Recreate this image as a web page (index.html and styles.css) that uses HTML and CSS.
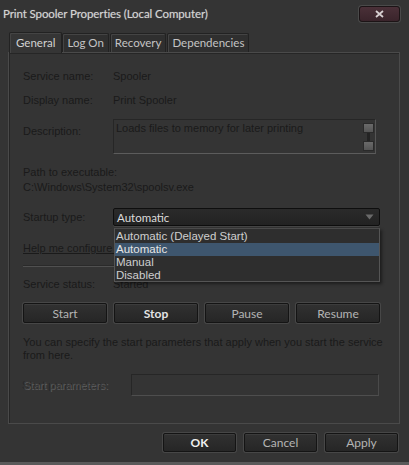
FILE: index.html
```html
<!DOCTYPE html>
<html>
<head>
<meta charset="utf-8">
<link rel="stylesheet" href="styles.css">
</head>
<body>
<div class="window">
  <div class="titlebar">
    <span class="title">Print Spooler Properties (Local Computer)</span>
    <span class="close">
      <svg width="9" height="8" viewBox="0 0 9 8"><path d="M1 1 L8 7 M8 1 L1 7" stroke="#d8d0d2" stroke-width="1.8"/></svg>
    </span>
  </div>
  <div class="tabs">
    <div class="tab active">General</div>
    <div class="tab">Log On</div>
    <div class="tab">Recovery</div>
    <div class="tab">Dependencies</div>
  </div>
  <div class="panel">
    <div class="row r1"><span class="lbl">Service name:</span><span class="val">Spooler</span></div>
    <div class="row r2"><span class="lbl">Display name:</span><span class="val">Print Spooler</span></div>
    <div class="row desc"><span class="lbl desc-lbl">Description:</span>
      <div class="descbox">
        <span class="desc-text">Loads files to memory for later printing</span>
        <div class="scroll"><span class="sb"></span><span class="sb"></span></div>
      </div>
    </div>
    <div class="path-lbl">Path to executable:</div>
    <div class="path">C:\Windows\System32\spoolsv.exe</div>
    <div class="row startup"><span class="lbl">Startup type:</span>
      <div class="combo"><span>Automatic</span>
        <svg class="arrow" width="9" height="6" viewBox="0 0 9 6"><path d="M0.5 0.5 L8.5 0.5 L4.5 5.5 Z" fill="#6a6a6a"/></svg>
      </div>
    </div>
    <div class="help"><span class="link">Help me configure service startup options.</span></div>
    <div class="sep"></div>
    <div class="row status"><span class="lbl">Service status:</span><span class="val">Started</span></div>
    <div class="btnrow">
      <div class="btn">Start</div>
      <div class="btn bright">Stop</div>
      <div class="btn">Pause</div>
      <div class="btn">Resume</div>
    </div>
    <div class="info">You can specify the start parameters that apply when you start the service from here.</div>
    <div class="row params"><span class="lbl disabled">Start parameters:</span><div class="pbox"></div></div>

    <div class="dropdown">
      <div class="opt">Automatic (Delayed Start)</div>
      <div class="opt sel">Automatic</div>
      <div class="opt">Manual</div>
      <div class="opt">Disabled</div>
    </div>
  </div>
  <div class="footer">
    <div class="fbtn ok">OK</div>
    <div class="fbtn">Cancel</div>
    <div class="fbtn">Apply</div>
  </div>
</div>
</body>
</html>
```
FILE: styles.css
```css
html, body { margin: 0; padding: 0; background: #343434; }
.window {
  width: 409px; height: 465px; box-sizing: border-box;
  background: #343434; position: relative; overflow: hidden;
  font-family: "Liberation Sans", Arial, sans-serif; font-size: 11px;
  border-bottom: 3px solid #5a5a5a;
}
.titlebar {
  height: 28px; display: flex; align-items: center; justify-content: space-between;
  padding: 0 9px 0 3px;
}
.title {
  font-family: Lato, "Open Sans", sans-serif; font-size: 11.5px; color: #d4d4d4;
  margin-top: -1px; letter-spacing: -0.1px; text-shadow: 0 0 1px rgba(210,210,210,0.5);
}
.close {
  width: 39px; height: 14px; margin-top: -1px;
  border: 1px solid #1c1416; border-radius: 3px;
  background: linear-gradient(#4a3038, #3a242b);
  box-shadow: 0 0 0 1px #4a4a4a;
  display: flex; align-items: center; justify-content: center;
}
.tabs { display: flex; align-items: flex-end; margin: 4px 0 0 9px; height: 20px; }
.tab {
  font-family: Lato, "Open Sans", sans-serif; font-size: 11.5px; color: #c4c4c4;
  height: 18px; line-height: 18px; padding: 0 4px;
  background: #2f2f2f; border: 1px solid #222; border-bottom: none;
  box-shadow: inset 1px 1px 0 #444;
  margin-right: 1px; border-radius: 2px 2px 0 0;
}
.tab.active {
  height: 20px; line-height: 19px; padding: 0 6px; background: #353535; color: #d2d2d2;
  position: relative; z-index: 2; margin-bottom: -1px; margin-right: 0;
}
.panel {
  margin-left: 8px; width: 392px; height: 372px; box-sizing: border-box;
  border: 1px solid #4a4a4a; box-shadow: inset 1px 1px 0 #262626;
  padding: 0 0 0 14px; position: relative;
  color: #1a1a1a; line-height: 13px;
}
.row { display: flex; align-items: center; }
.lbl { width: 90px; flex: none; }
.r1 { margin-top: 17px; }
.r2 { margin-top: 11px; }
.desc { margin-top: 12px; align-items: flex-start; }
.desc-lbl { margin-top: 6px; }
.descbox {
  width: 263px; height: 35px; box-sizing: border-box; position: relative;
  border: 1px solid #262626; border-bottom: 1px solid #5c5c5c; border-right: 1px solid #555;
  padding: 2px 0 0 2px;
}
.scroll {
  position: absolute; right: 1px; top: 3px; width: 11px; height: 28px;
  display: flex; flex-direction: column; justify-content: space-between; align-items: center;
  background: linear-gradient(90deg, transparent 4px, #232323 4px, #232323 7px, transparent 7px);
}
.sb {
  width: 11px; height: 10px; box-sizing: border-box;
  background: linear-gradient(#6a6a6a, #555); border: 1px solid #2a2a2a;
}
.path-lbl { margin-top: 12px; }
.path { margin-top: 2px; }
.startup { margin-top: 14px; }
.combo {
  width: 267px; height: 18px; box-sizing: border-box;
  border: 1px solid #0e0e0e; border-radius: 2px;
  background: linear-gradient(#2a2a2a, #222);
  box-shadow: 0 1px 0 #454545;
  color: #dcdcdc; font-family: Lato, "Open Sans", sans-serif; font-size: 11.5px;
  display: flex; align-items: center; justify-content: space-between; padding: 0 5px 0 3px;
}
.help { margin-top: 16px; }
.link { text-decoration: underline; }
.sep { margin-top: 11px; width: 356px; height: 1px; background: #505050; box-shadow: 0 -1px 0 #2a2a2a; }
.status { margin-top: 11px; }
.btnrow { display: flex; gap: 7px; margin-top: 12px; width: 357px; }
.btn, .fbtn {
  height: 20px; box-sizing: border-box; flex: 1;
  border: 1px solid #141414; border-radius: 2px;
  background: linear-gradient(#313131, #262626);
  box-shadow: 0 0 0 1px #474747, inset 0 1px 0 #3c3c3c;
  color: #b4b4b4; font-family: Lato, "Open Sans", sans-serif; font-size: 12px;
  display: flex; align-items: center; justify-content: center;
}
.btn.bright { color: #e4e4e4; font-weight: bold; }
.info { margin-top: 13px; width: 360px; }
.params { margin-top: 12px; }
.disabled { width: 108px; color: #3a3a3a; text-shadow: 1px 1px 0 #5e5e5e, -1px 0 0 #262626; }
.pbox {
  width: 248px; height: 22px; box-sizing: border-box;
  border: 1px solid #262626; border-right-color: #4a4a4a; border-bottom-color: #4e4e4e;
}
.dropdown {
  position: absolute; left: 105px; top: 175px; width: 266px; height: 54px; box-sizing: border-box;
  background: #2e2e2e; border: 1px solid #555; border-top-color: #4a4a4a;
  box-shadow: 2px 2px 3px rgba(0,0,0,0.45);
  font-family: "Liberation Sans", Arial, sans-serif; font-size: 11.5px; color: #cfcfcf;
  padding-top: 1px;
}
.opt { height: 13px; line-height: 13px; padding-left: 1px; }
.opt.sel { background: #3e566e; color: #e6e6e6; }
.footer { display: flex; justify-content: flex-end; gap: 8px; padding: 9px 11px 0 0; }
.fbtn { flex: none; width: 73px; height: 19px; }
.fbtn.ok { color: #f0f0f0; font-weight: bold; }
```
